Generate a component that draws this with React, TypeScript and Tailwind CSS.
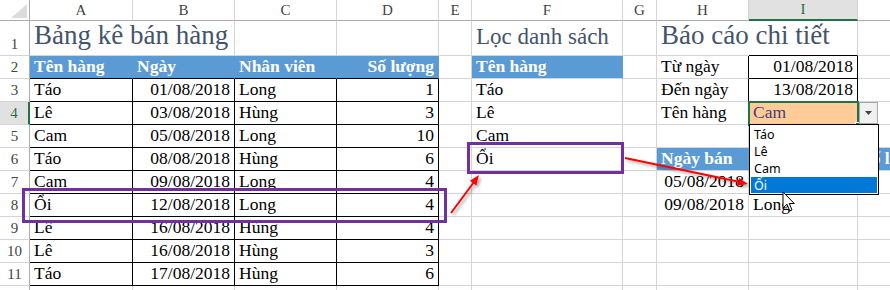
import React from "react";

const base = "flex items-end whitespace-nowrap leading-none px-[4px] text-[17.5px]";
const gb = "border-r border-b border-r-[#d4d4d4] border-b-[#d4d4d4]";
const tb = "border-r border-b border-r-black border-b-black";
const d = base + " pb-[3px] ";
const title = "flex items-end whitespace-nowrap leading-none px-[4px] pb-[6px] text-[27px] text-[#44546a] ";
const titleSm = "flex items-end whitespace-nowrap leading-none px-[4px] pb-[7px] text-[23px] text-[#44546a] ";
const blueHdr = base + " pb-[3px] bg-[#5b9bd5] text-white font-bold border-r border-b border-r-[#5b9bd5] border-b-black ";
const blueHdr2 = base + " pb-[3px] bg-[#5b9bd5] text-white font-bold border-r border-b border-r-[#5b9bd5] border-b-[#d4d4d4] ";

type C = [React.ReactNode, string];

const colHead = "flex items-center justify-center text-[15px] text-[#444] border-r border-b border-r-[#d4d4d4] border-b-[#ababab] bg-white";
const colHeadSel = "flex items-center justify-center text-[15px] text-[#217346] border-r border-b-2 border-r-[#d4d4d4] border-b-[#217346] bg-[#e1e1e1]";
const rowHead = "flex items-end justify-center pb-[3px] text-[15px] text-[#444] leading-none border-r border-b border-r-[#ababab] border-b-[#d4d4d4]";
const rowHeadSel = "flex items-end justify-center pb-[3px] text-[15px] text-[#217346] leading-none border-r-2 border-b border-r-[#217346] border-b-[#d4d4d4] bg-[#e1e1e1]";

const tableRows: [string, string, string, string][] = [
  ["Táo", "01/08/2018", "Long", "1"],
  ["Lê", "03/08/2018", "Hùng", "3"],
  ["Cam", "05/08/2018", "Long", "10"],
  ["Táo", "08/08/2018", "Hùng", "6"],
  ["Cam", "09/08/2018", "Long", "4"],
  ["Ổi", "12/08/2018", "Long", "4"],
  ["Lê", "16/08/2018", "Hùng", "4"],
  ["Lê", "16/08/2018", "Hùng", "3"],
  ["Táo", "17/08/2018", "Hùng", "6"],
];

const corner = (
  <div className="relative border-r border-b border-r-[#ababab] border-b-[#ababab] bg-white">
    <svg className="absolute left-[11px] top-[4px]" width="16" height="14" viewBox="0 0 16 14">
      <polygon points="16,0 16,14 0,14" fill="#dcdcdc" />
    </svg>
  </div>
);

function buildRows(): C[][] {
  const rows: C[][] = [];
  rows.push([
    ["1", rowHead],
    ["Bảng kê bán hàng", title + "border-r border-b border-r-transparent border-b-[#d4d4d4]"],
    ["", d + gb],
    ["", d + gb],
    ["", d + gb],
    ["", d + gb],
    ["Lọc danh sách", titleSm + gb],
    ["", d + gb],
    ["Báo cáo chi tiết", title + "border-r border-b border-r-transparent border-b-[#d4d4d4]"],
    ["", d + "border-r border-b border-r-[#d4d4d4] border-b-black"],
    ["", d + gb],
  ]);
  rows.push([
    ["2", rowHead],
    ["Tên hàng", blueHdr],
    ["Ngày", blueHdr],
    ["Nhân viên", blueHdr],
    ["Số lượng", blueHdr + "justify-end"],
    ["", d + gb],
    ["Tên hàng", blueHdr2],
    ["", d + gb],
    ["Từ ngày", d + "border-r border-b border-r-black border-b-[#d4d4d4]"],
    ["01/08/2018", d + tb + " justify-end"],
    ["", d + gb],
  ]);
  const extras: C[][] = [
    [["", d + gb], ["Táo", d + gb], ["", d + gb], ["Đến ngày", d + "border-r border-b border-r-black border-b-[#d4d4d4]"], ["13/08/2018", d + tb + " justify-end"], ["", d + gb]],
    [["", d + gb], ["Lê", d + gb], ["", d + gb], ["Tên hàng", d + gb], ["Cam", d + gb + " bg-[#ffcc99] text-[#3f3f76]"], ["", d + gb]],
    [["", d + gb], ["Cam", d + gb], ["", d + gb], ["", d + gb], ["", d + gb], ["", d + gb]],
    [["", d + gb], ["Ổi", d + gb], ["", d + gb], ["Ngày bán", blueHdr2], ["Nhân viên", blueHdr2], ["Số lượng", blueHdr2]],
    [["", d + gb], ["", d + gb], ["", d + gb], ["05/08/2018", d + gb + " justify-end"], ["Long", d + gb], ["", d + gb]],
    [["", d + gb], ["", d + gb], ["", d + gb], ["09/08/2018", d + gb + " justify-end"], ["Long", d + gb], ["", d + gb]],
    [["", d + gb], ["", d + gb], ["", d + gb], ["", d + gb], ["", d + gb], ["", d + gb]],
    [["", d + gb], ["", d + gb], ["", d + gb], ["", d + gb], ["", d + gb], ["", d + gb]],
    [["", d + gb], ["", d + gb], ["", d + gb], ["", d + gb], ["", d + gb], ["", d + gb]],
  ];
  tableRows.forEach((r, i) => {
    const n = i + 3;
    rows.push([
      [String(n), n === 4 ? rowHeadSel : rowHead],
      [r[0], d + tb],
      [r[1], d + tb + " justify-end"],
      [r[2], d + tb],
      [r[3], d + tb + " justify-end"],
      ...extras[i],
    ]);
  });
  rows.push([
    ["12", rowHead],
    ["", d + gb], ["", d + gb], ["", d + gb], ["", d + gb], ["", d + gb], ["", d + gb], ["", d + gb], ["", d + gb], ["", d + gb], ["", d + gb],
  ]);
  return rows;
}

export default function App() {
  const rows = buildRows();
  const letters = ["A", "B", "C", "D", "E", "F", "G", "H", "I", "J"];
  return (
    <div className="relative w-[890px] h-[290px] overflow-hidden bg-white font-['Liberation_Serif',serif] text-black">
      <div className="grid w-max grid-cols-[30px_103px_102px_102px_102px_33px_151px_34px_92px_109px_102px] grid-rows-[21px_35px_repeat(11,23px)]">
        {corner}
        {letters.map((l) => (
          <div key={l} className={l === "I" ? colHeadSel : colHead}>
            {l}
          </div>
        ))}
        {rows.flatMap((r, ri) =>
          r.map((c, ci) => (
            <div key={`${ri}-${ci}`} className={c[1]}>
              {c[0]}
            </div>
          ))
        )}
      </div>

      {/* purple highlight boxes */}
      <div className="absolute left-[22px] top-[188px] w-[425px] h-[35px] border-[3px] border-[#7030a0]" />
      <div className="absolute left-[467px] top-[142px] w-[157px] h-[32px] border-[3px] border-[#7030a0]" />

      {/* selection of I4 */}
      <div className="absolute left-[748px] top-[101px] w-[111px] h-[25px] border-2 border-[#217346]" />
      <div className="absolute left-[855px] top-[122px] w-[5px] h-[5px] bg-[#217346] border border-white" />

      {/* dropdown button */}
      <div className="absolute left-[859px] top-[102px] w-[19px] h-[22px] bg-[#f0f0f0] border border-[#a6a6a6] flex items-center justify-center">
        <svg width="7" height="4" viewBox="0 0 7 4">
          <polygon points="0,0 7,0 3.5,4" fill="#444" />
        </svg>
      </div>

      {/* dropdown list */}
      <div className="absolute left-[749px] top-[124px] w-[130px] h-[71px] border border-black bg-white font-['Noto_Sans',sans-serif] text-[12.5px] leading-[17px] pt-[1px] px-[1px]">
        <div className="px-[3px] h-[17px]">Táo</div>
        <div className="px-[3px] h-[17px]">Lê</div>
        <div className="px-[3px] h-[17px]">Cam</div>
        <div className="px-[3px] h-[16px] bg-[#0078d7] text-white">Ổi</div>
      </div>

      {/* arrows */}
      <svg className="absolute left-0 top-0 pointer-events-none" width="890" height="290" viewBox="0 0 890 290">
        <defs>
          <filter id="sh" x="-20%" y="-20%" width="140%" height="140%">
            <feDropShadow dx="2" dy="2" stdDeviation="1.5" floodColor="#000" floodOpacity="0.35" />
          </filter>
        </defs>
        <g filter="url(#sh)">
          <line x1="451" y1="213" x2="474" y2="182" stroke="#ff0000" strokeWidth="2" />
          <polygon points="479,175 476.3,185.4 469.9,180.7" fill="#ff0000" />
          <line x1="625" y1="158" x2="740" y2="182" stroke="#ff0000" strokeWidth="2" />
          <polygon points="748,184 737.4,185.8 739.1,178" fill="#ff0000" />
        </g>
      </svg>

      {/* mouse cursor */}
      <svg className="absolute left-[782px] top-[191px]" width="14" height="22" viewBox="0 0 14 22">
        <path d="M1 1 L1 17 L5 13.2 L7.8 20 L10 19 L7.3 12.5 L12.3 12.5 Z" fill="white" stroke="black" strokeWidth="1" />
      </svg>
    </div>
  );
}
